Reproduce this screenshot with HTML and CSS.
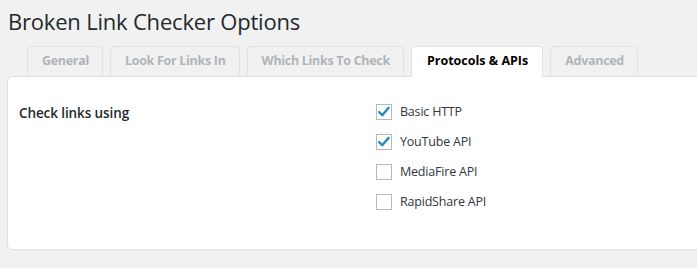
FILE: index.html
```html
<!DOCTYPE html>
<html>
<head>
<meta charset="utf-8">
<link rel="stylesheet" href="styles.css">
</head>
<body>
<div class="wrap">
  <h1 class="title">Broken Link Checker Options</h1>
  <nav class="tabs">
    <span class="tab">General</span>
    <span class="tab">Look For Links In</span>
    <span class="tab">Which Links To Check</span>
    <span class="tab active">Protocols &amp; APIs</span>
    <span class="tab">Advanced</span>
  </nav>
  <div class="panel">
    <div class="row">
      <div class="label">Check links using</div>
      <div class="options">
        <label class="opt"><span class="box checked"><svg viewBox="0 0 16 16" width="16" height="16"><path d="M3.2 8.2 L6.3 11.2 L12.6 3.8" fill="none" stroke="#1e8cbe" stroke-width="2.4" stroke-linecap="round" stroke-linejoin="round"/></svg></span>Basic HTTP</label>
        <label class="opt"><span class="box checked"><svg viewBox="0 0 16 16" width="16" height="16"><path d="M3.2 8.2 L6.3 11.2 L12.6 3.8" fill="none" stroke="#1e8cbe" stroke-width="2.4" stroke-linecap="round" stroke-linejoin="round"/></svg></span>YouTube API</label>
        <label class="opt"><span class="box"></span>MediaFire API</label>
        <label class="opt"><span class="box"></span>RapidShare API</label>
      </div>
    </div>
  </div>
</div>
</body>
</html>
```

FILE: styles.css
```css
html { overflow: hidden; }
body {
  margin: 0;
  background: #f1f1f1;
  font-family: "Open Sans", "Noto Sans", sans-serif;
  color: #23282d;
}
.wrap {
  padding: 4px 0 0 7px;
  margin-right: -20px;
}
.title {
  margin: 0 0 0 1px;
  font-size: 22px;
  font-weight: 400;
  line-height: 34px;
  color: #23282d;
  letter-spacing: -0.2px;
}
.tabs {
  display: flex;
  gap: 7px;
  margin: 8px 0 0 20px;
  position: relative;
  z-index: 1;
}
.tab {
  box-sizing: border-box;
  height: 30px;
  line-height: 28px;
  padding: 0 13px 0 14px;
  border: 1px solid #e2e2e2;
  border-bottom: none;
  border-radius: 4px 4px 0 0;
  background: #f1f1f1;
  color: #b0b4b8;
  font-size: 12.5px;
  font-weight: 700;
  letter-spacing: -0.3px;
}
.tab.active {
  background: #fff;
  color: #000;
  height: 31px;
  margin-bottom: -1px;
  padding: 0 14px 0 15px;
  letter-spacing: 0;
}
.panel {
  background: #fff;
  border: 1px solid #e0e0e0;
  border-radius: 5px;
  box-sizing: border-box;
  height: 174px;
}
.row {
  display: flex;
  padding-top: 24px;
}
.label {
  width: 357px;
  padding-left: 11px;
  font-size: 13.5px;
  font-weight: 600;
  line-height: 24px;
  color: #23282d;
  letter-spacing: -0.1px;
}
.options {
  display: flex;
  flex-direction: column;
  gap: 14px;
  padding-top: 3px;
}
.opt {
  display: flex;
  align-items: center;
  gap: 8px;
  font-size: 12.5px;
  line-height: 16px;
  color: #32373c;
  letter-spacing: -0.2px;
}
.box {
  box-sizing: border-box;
  width: 16px;
  height: 16px;
  border: 1px solid #b4b9be;
  background: #fff;
  display: flex;
  align-items: center;
  justify-content: center;
}
.box svg { display: block; margin: -1px; }
```
